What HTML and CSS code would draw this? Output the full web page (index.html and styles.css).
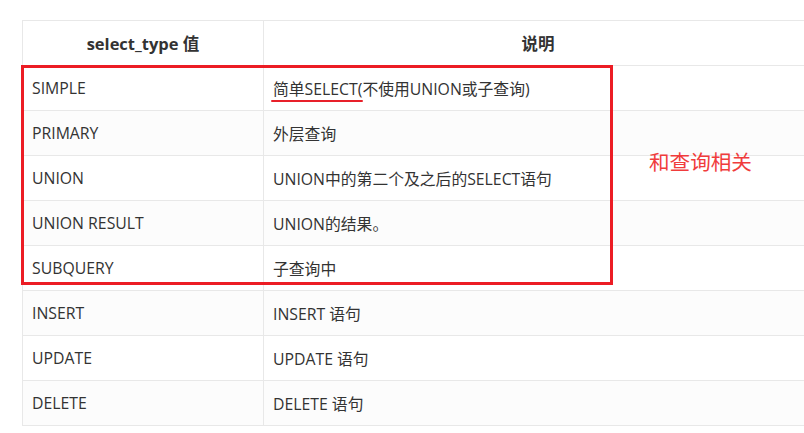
FILE: index.html
```html
<!DOCTYPE html>
<html lang="zh">
<head>
<meta charset="utf-8">
<link rel="stylesheet" href="styles.css">
</head>
<body>
<div class="wrap">
  <table class="tbl">
    <thead>
      <tr><th class="c1">select_type 值</th><th class="c2">说明</th></tr>
    </thead>
    <tbody>
      <tr><td>SIMPLE</td><td><span class="mark">简单SELECT</span>(不使用UNION或子查询)</td></tr>
      <tr><td>PRIMARY</td><td>外层查询</td></tr>
      <tr><td>UNION</td><td>UNION中的第二个及之后的SELECT语句</td></tr>
      <tr><td>UNION RESULT</td><td>UNION的结果。</td></tr>
      <tr><td>SUBQUERY</td><td>子查询中</td></tr>
      <tr><td>INSERT</td><td>INSERT 语句</td></tr>
      <tr><td>UPDATE</td><td>UPDATE 语句</td></tr>
      <tr><td>DELETE</td><td>DELETE 语句</td></tr>
    </tbody>
  </table>
  <div class="redbox"></div>
  <div class="note">和查询相关</div>
</div>
</body>
</html>
```
FILE: styles.css
```css
html, body {
  margin: 0;
  padding: 0;
  background: #fff;
  overflow: hidden;
}
body {
  width: 804px;
  height: 433px;
  font-family: "Open Sans", "Noto Sans CJK SC", sans-serif;
  color: #333;
}
.wrap {
  position: relative;
  padding: 20px 0 0 22px;
}
.tbl {
  border-collapse: collapse;
  width: 791px;
  table-layout: fixed;
  font-size: 15.8px;
}
.tbl th, .tbl td {
  border: 1px solid #e8e8e8;
  height: 44px;
  padding: 0 0 0 9px;
  text-align: left;
  vertical-align: middle;
  white-space: nowrap;
}
.tbl th {
  text-align: center;
  font-weight: 700;
  font-size: 16.5px;
  color: #333;
  padding: 0;
}
.c1 { width: 240px; }
.tbl tbody tr:nth-child(even) td { background: #fcfcfc; }
.mark {
  position: relative;
}
.mark::after {
  content: "";
  position: absolute;
  left: -2px;
  right: -5px;
  bottom: -2px;
  height: 2px;
  background: #e8202a;
  border-radius: 1px;
}
.redbox {
  position: absolute;
  left: 21px;
  top: 65px;
  width: 586px;
  height: 214px;
  border: 3px solid #ec1c24;
}
.note {
  position: absolute;
  left: 649px;
  top: 146px;
  font-family: "Noto Sans CJK SC", sans-serif;
  font-size: 20.6px;
  color: #f03c3c;
}
```
